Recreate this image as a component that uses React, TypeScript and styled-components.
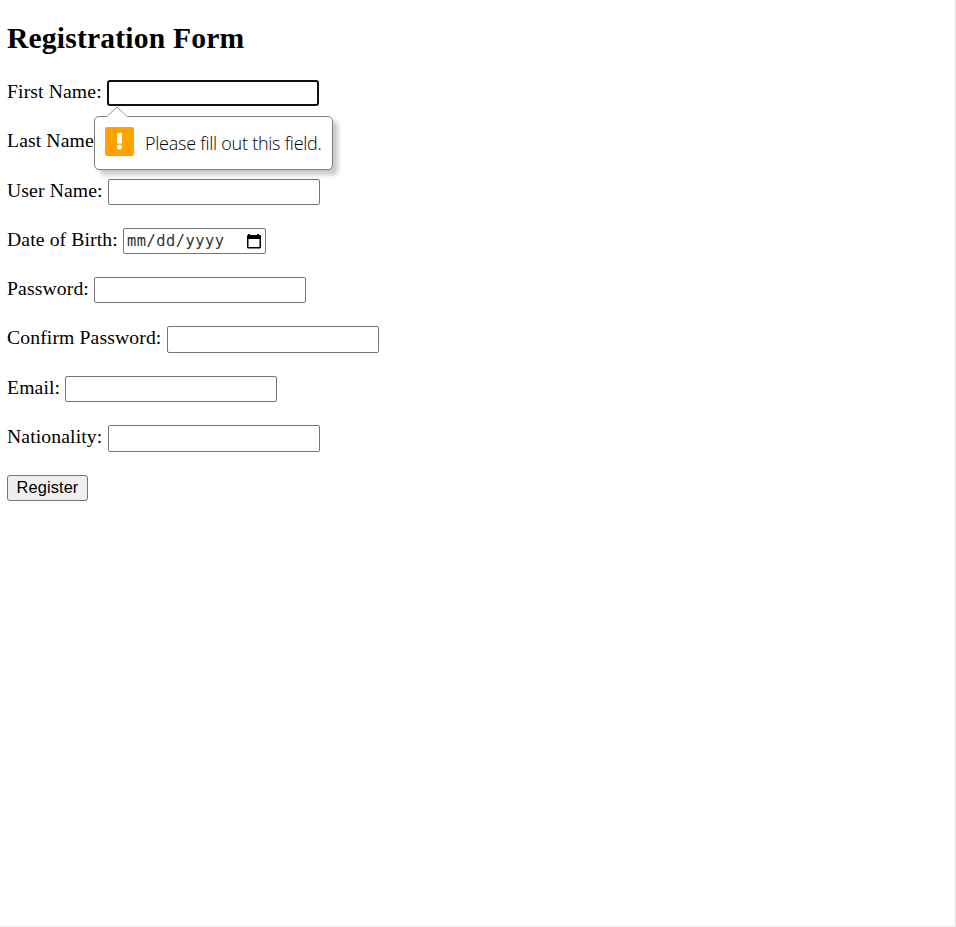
import React from 'react';
import styled, { createGlobalStyle } from 'styled-components';

const GlobalStyle = createGlobalStyle`
  * { box-sizing: border-box; }
  body { margin: 0; background: #fff; overflow: hidden; }
`;

const Page = styled.main`
  height: 927px;
  padding: 21px 0 0 7px;
  border-right: 1px solid #dcdcd8;
  border-bottom: 1px solid #e9e9e9;
  background: #fff;
  color: #000;
  font-family: 'Liberation Serif', 'Times New Roman', serif;
  font-size: 19.7px;
`;

const Title = styled.h2`
  margin: 0 0 25px;
  height: 34px;
  line-height: 34px;
  font-size: 29.6px;
  font-weight: 700;
  letter-spacing: 0.18px;
  white-space: nowrap;
`;

const Form = styled.form`
  display: flex;
  flex-direction: column;
`;

const Row = styled.div`
  position: relative;
  display: flex;
  align-items: flex-start;
  height: 49.28px;
`;

const Label = styled.label<{ $width: number }>`
  flex: none;
  width: ${(p) => p.$width}px;
  line-height: 22px;
  letter-spacing: 0.11px;
  white-space: nowrap;
`;

const Input = styled.input<{ $focused?: boolean; $tall?: boolean }>`
  width: 212px;
  height: ${(p) => (p.$tall ? 27 : 26)}px;
  padding: 1px 3px;
  border: ${(p) => (p.$focused ? '2px solid #101010' : '1px solid #767676')};
  border-radius: ${(p) => (p.$focused ? 3 : 2)}px;
  outline: none;
  background: #fff;
`;

const DateField = styled.div`
  display: flex;
  align-items: center;
  justify-content: space-between;
  width: 143px;
  height: 26px;
  padding: 0 4px 0 3px;
  border: 1px solid #767676;
  border-radius: 2px;
  color: #333;
  font: 15.4px 'DejaVu Sans Mono', monospace;
  letter-spacing: 0.48px;
`;

const CalendarIcon = styled.svg`
  width: 15px;
  height: 16px;
  color: #000;
`;

const SubmitButton = styled.button`
  width: 81px;
  height: 26px;
  margin-top: 0.6px;
  padding: 0 0 1px;
  border: 1px solid #767676;
  border-radius: 3px;
  background: #efefef;
  color: #000;
  font: 16.4px 'Liberation Sans', Arial, sans-serif;
  letter-spacing: 0.1px;
`;

const Bubble = styled.div`
  position: absolute;
  z-index: 1;
  top: 36px;
  left: 87px;
  display: flex;
  align-items: center;
  gap: 11px;
  width: 239px;
  height: 54px;
  padding: 0 0 3px 10px;
  border: 1px solid #808080;
  border-radius: 5px;
  background: #fff;
  box-shadow: 5px 5px 5px rgba(0, 0, 0, 0.22);
  color: #000;
  font: 300 18px 'Open Sans', 'Noto Sans', sans-serif;
  letter-spacing: -0.25px;
  white-space: nowrap;
`;

const BubbleArrow = styled.svg`
  position: absolute;
  top: -11px;
  left: 11px;
  width: 22px;
  height: 12px;
`;

const WarningIcon = styled.svg`
  flex: none;
  width: 29px;
  height: 29px;
`;

const BubbleText = styled.span`
  padding-top: 3px;
`;

type Field = { id: string; label: string; width: number; type?: string; tall?: boolean };

const fields: Field[] = [
  { id: 'last', label: 'Last Name:', width: 99 },
  { id: 'user', label: 'User Name:', width: 101 },
  { id: 'birth', label: 'Date of Birth:', width: 116, type: 'date' },
  { id: 'password', label: 'Password:', width: 87, type: 'password' },
  { id: 'confirm', label: 'Confirm Password:', width: 160, type: 'password', tall: true },
  { id: 'email', label: 'Email:', width: 58, type: 'email' },
  { id: 'nationality', label: 'Nationality:', width: 101, tall: true },
];

function ValidationBubble() {
  return (
    <Bubble role="alert">
      <BubbleArrow viewBox="0 0 22 12">
        <path d="M0 12V11L11 0.7L22 11V12Z" fill="#fff" />
        <path d="M0.5 11L11 1L21.5 11" fill="none" stroke="#999" />
      </BubbleArrow>
      <WarningIcon viewBox="0 0 29 29">
        <rect width="29" height="29" rx="2" fill="#ffa200" />
        <rect x="12" y="6" width="5" height="10.5" fill="#fff" />
        <circle cx="14.5" cy="20" r="2.5" fill="#fff" />
      </WarningIcon>
      <BubbleText>Please fill out this field.</BubbleText>
    </Bubble>
  );
}

export default function App() {
  return (
    <>
      <GlobalStyle />
      <Page>
        <Title>Registration Form</Title>
        <Form noValidate onSubmit={(e) => e.preventDefault()}>
          <Row>
            <Label htmlFor="first" $width={100}>First Name:</Label>
            <Input id="first" $focused />
            <ValidationBubble />
          </Row>
          {fields.map((f) => (
            <Row key={f.id}>
              <Label htmlFor={f.id} $width={f.width}>{f.label}</Label>
              {f.type === 'date' ? (
                <DateField id={f.id}>
                  mm/dd/yyyy
                  <CalendarIcon viewBox="0 0 15 16">
                    <path
                      fillRule="evenodd"
                      d="M2 1H4V2H11V1H13V2H14Q15 2 15 3V14Q15 15.5 13.5 15.5H2.5Q1 15.5 1 14V3Q1 2 2 2ZM2.5 6V14H13.5V6Z"
                    />
                  </CalendarIcon>
                </DateField>
              ) : (
                <Input id={f.id} type={f.type ?? 'text'} $tall={f.tall} />
              )}
            </Row>
          ))}
          <SubmitButton type="submit">Register</SubmitButton>
        </Form>
      </Page>
    </>
  );
}
